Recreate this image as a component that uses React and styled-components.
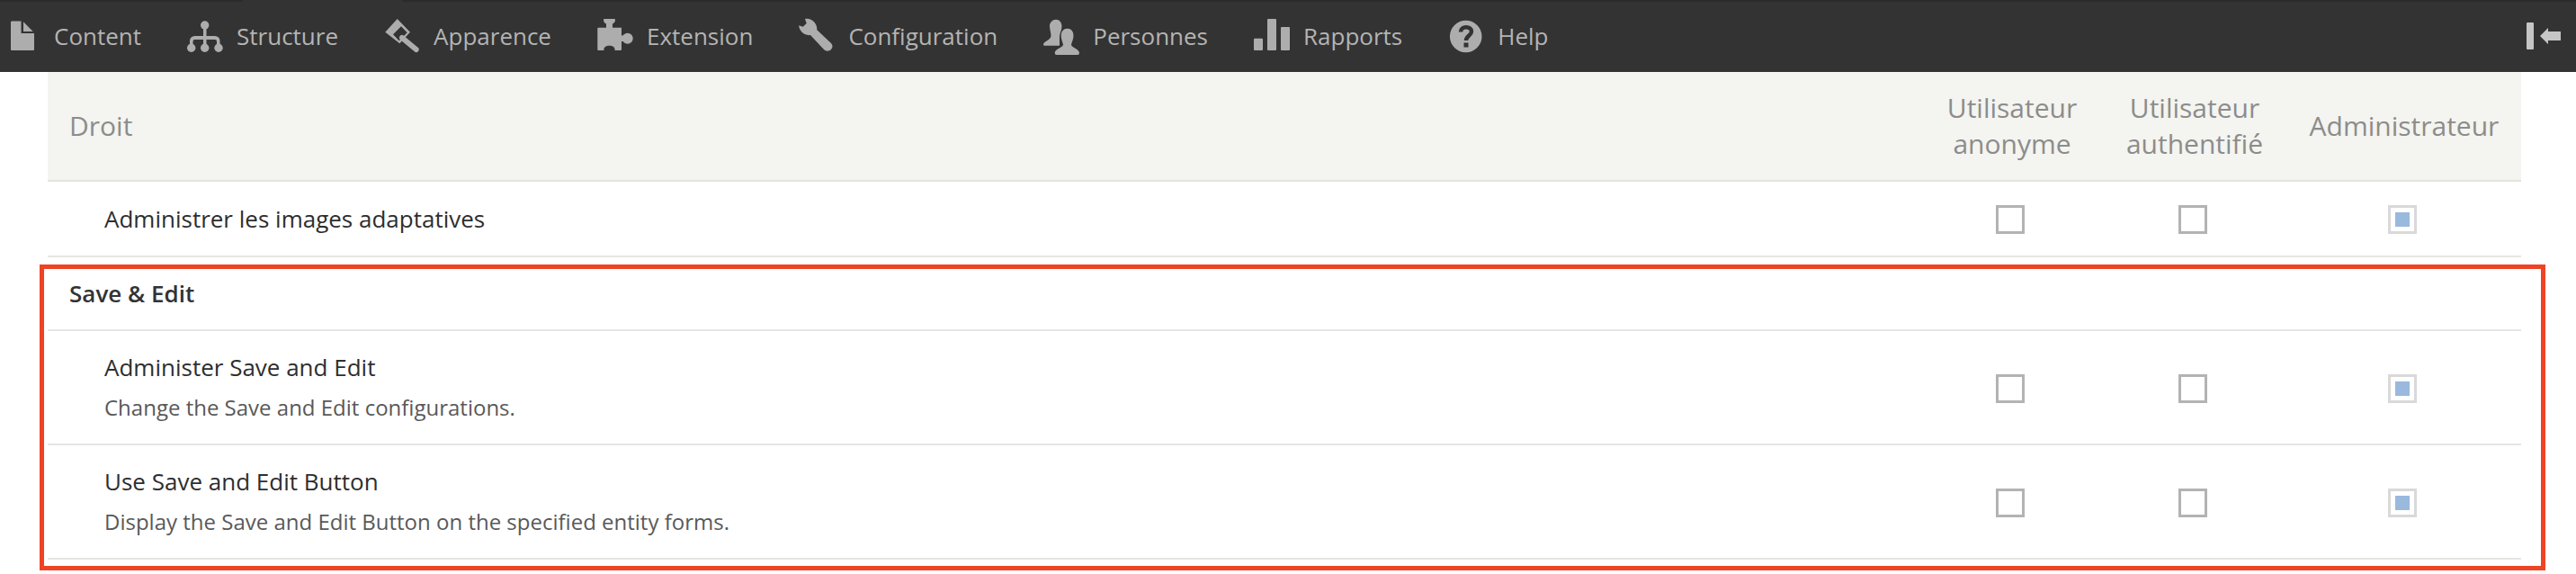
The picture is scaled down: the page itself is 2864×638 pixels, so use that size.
import React from "react";
import styled, { createGlobalStyle } from "styled-components";

const GlobalStyle = createGlobalStyle`
  html, body {
    margin: 0;
    padding: 0;
    background: #fff;
  }
  body {
    font-family: "Open Sans", "Liberation Sans", sans-serif;
  }
`;

const Page = styled.div`
  position: relative;
  width: 2864px;
  height: 638px;
  overflow: hidden;
  background: #fff;
`;

const Toolbar = styled.nav`
  display: flex;
  align-items: center;
  gap: 51px;
  height: 80px;
  padding: 0 17px 0 5px;
  box-sizing: border-box;
  background-color: #333;
  background-image: linear-gradient(
    to right,
    #2b2b2b 270px,
    #333 270px,
    #333 447px,
    #2b2b2b 447px
  );
  background-size: 100% 2px;
  background-repeat: no-repeat;
`;

const NavItem = styled.a`
  display: flex;
  align-items: center;
  gap: 15px;
  color: #b4b4b4;
  font-size: 26px;
  line-height: 40px;
  white-space: nowrap;
`;

const NavIcon = styled.svg`
  display: block;
  width: 40px;
  height: 40px;
  fill: #adadad;
  overflow: visible;
`;

const Collapse = styled.svg`
  display: block;
  width: 38px;
  height: 30px;
  margin-left: auto;
  fill: #c6c6c6;
`;

const Table = styled.div`
  margin: 0 61px 0 53px;
`;

const Row = styled.div`
  display: grid;
  grid-template-columns: 1fr 200px 206px 260px;
  align-items: center;
  border-bottom: 2px solid ${(p) => (p.$head ? "#e4e4de" : "#e5e5e2")};
  background: ${(p) => (p.$head ? "#f4f4f0" : "transparent")};
  min-height: ${(p) => p.$height}px;
`;

const HeadCell = styled.div`
  color: #8c8c8c;
  font-size: 30px;
  line-height: 40px;
  text-align: ${(p) => (p.$first ? "left" : "center")};
  padding-left: ${(p) => (p.$first ? "24px" : "0")};
`;

const GroupTitle = styled.div`
  grid-column: 1 / -1;
  padding-left: 24px;
  color: #333;
  font-size: 26px;
  font-weight: 600;
  line-height: 40px;
`;

const PermCell = styled.div`
  padding-left: 63px;
`;

const PermTitle = styled.div`
  color: #2e2e2e;
  font-size: 26px;
  line-height: 40px;
`;

const PermDesc = styled.div`
  margin-top: 5px;
  color: #595959;
  font-size: 24px;
  line-height: 40px;
`;

const BoxCell = styled.div`
  display: flex;
  justify-content: center;
  padding-right: 4px;
  padding-top: ${(p) => p.$nudge}px;
`;

const CheckBox = styled.span`
  display: flex;
  align-items: center;
  justify-content: center;
  width: 32px;
  height: 32px;
  box-sizing: border-box;
  border: 3px solid ${(p) => (p.$checked ? "#d9d9d9" : "#b3b3b3")};
  background: #fff;

  &::after {
    content: "";
    display: ${(p) => (p.$checked ? "block" : "none")};
    width: 16px;
    height: 16px;
    background: #99b9dd;
  }
`;

const Highlight = styled.div`
  position: absolute;
  top: 294px;
  left: 44px;
  width: 2786px;
  height: 340px;
  box-sizing: border-box;
  border: 5px solid #ee4325;
  pointer-events: none;
`;

const icons = {
  content: (
    <>
      <path d="M8 3.5H18.5V17H33V35a1 1 0 0 1-1 1H8a1 1 0 0 1-1-1V4.5a1 1 0 0 1 1-1z" />
      <path d="M21 4.3L31.7 15H21z" />
    </>
  ),
  structure: (
    <>
      <circle cx="19.7" cy="8" r="4.7" />
      <circle cx="4.7" cy="33.3" r="4.7" />
      <circle cx="19.7" cy="33.3" r="4.7" />
      <circle cx="35" cy="33.3" r="4.7" />
      <path d="M18 8h3.5v12H31a5.5 5.5 0 0 1 5.5 5.5V33H33v-7a2 2 0 0 0-2-2H21.5v9H18v-9H8.5a2 2 0 0 0-2 2v7H3v-7.5A5.5 5.5 0 0 1 8.500 20H18z" />
    </>
  ),
  appearance: (
    <>
      <path
        fillRule="evenodd"
        d="M14.700 1L1.300 15.700L17.300 28.300L29 15.700zM10 18.300L19 9.300L25.700 16.300L16.700 25.300z"
      />
      <path d="M20 22L35.700 35" stroke="#adadad" strokeWidth="6" strokeLinecap="round" />
    </>
  ),
  extension: (
    <>
      <path d="M1 10.700H10V6.500Q7 5 7 2Q7 1 8 1H19Q20 1 20 2Q20 5 17 6.500V10.700H27V19.500H30V26H27V35Q27 36 26 36H19.500C21 29 6 29 7.500 36H1.300Q.3 36 .3 35V11.700Q.3 10.700 1 10.700z" />
      <circle cx="33.700" cy="22.700" r="6" />
    </>
  ),
  configuration: (
    <path d="M7 1L8.700 6L4.700 9.700L.2 8.300C.5 15 7 20 13 19L28 35C30.500 37.500 34 37 36 35C38 33 38 30 36 28L20.300 13.300C21 6 14 -.5 7 1z" />
  ),
  people: (
    <>
      <path d="M14 1.700C18 1.700 20.500 5 20.500 9C20.500 14 18 18 18 22L18 30.700H1.500Q0 30.700 0 29.500C0 26 8 25 8.500 20C8.500 16 7 13 7 9C7 5 10 1.700 14 1.700z" />
      <path
        d="M26.700 11.700C31 11.700 33.500 15 33.500 19.500C33.500 24 31.500 27 31 29.500C31 33 40 34 40 39Q40 41 38 41H14.700Q12.700 41 12.700 39C12.700 34 22 33 22 29.500C21.500 27 19.700 24 19.700 19.500C19.700 15 22.500 11.700 26.700 11.700z"
        stroke="#333"
        strokeWidth="2.500"
        paintOrder="stroke"
      />
    </>
  ),
  reports: (
    <>
      <rect x="0" y="22.700" width="10" height="13.300" rx="1" />
      <rect x="15" y="1" width="10" height="35" rx="1" />
      <rect x="30" y="10" width="10" height="26" rx="1" />
    </>
  ),
  help: (
    <>
      <circle cx="19.700" cy="20.500" r="17.800" />
      <path
        d="M14 15.500C14 8.500 26 8.500 26 15C26 19.500 20 19.500 20 25"
        fill="none"
        stroke="#333"
        strokeWidth="4.500"
      />
      <rect x="17.500" y="27.500" width="5" height="5" fill="#333" />
    </>
  ),
};

const navItems = [
  { label: "Content", icon: "content" },
  { label: "Structure", icon: "structure" },
  { label: "Apparence", icon: "appearance" },
  { label: "Extension", icon: "extension" },
  { label: "Configuration", icon: "configuration" },
  { label: "Personnes", icon: "people" },
  { label: "Rapports", icon: "reports" },
  { label: "Help", icon: "help" },
];

function Boxes({ nudge }) {
  return (
    <>
      <BoxCell $nudge={nudge}>
        <CheckBox />
      </BoxCell>
      <BoxCell $nudge={nudge}>
        <CheckBox />
      </BoxCell>
      <BoxCell $nudge={nudge}>
        <CheckBox $checked />
      </BoxCell>
    </>
  );
}

function Permission({ title, desc }) {
  return (
    <Row $height={desc ? 125 : 82}>
      <PermCell>
        <PermTitle>{title}</PermTitle>
        {desc && <PermDesc>{desc}</PermDesc>}
      </PermCell>
      <Boxes nudge={desc ? 3 : 1} />
    </Row>
  );
}

export default function App() {
  return (
    <Page>
      <GlobalStyle />
      <Toolbar>
        {navItems.map((item) => (
          <NavItem key={item.label}>
            <NavIcon viewBox="0 0 40 40">{icons[item.icon]}</NavIcon>
            {item.label}
          </NavItem>
        ))}
        <Collapse viewBox="0 0 38 30">
          <rect x="0" y="0" width="8" height="30" rx="1" />
          <path d="M15 15L24 6V10H38V20H24V24z" />
        </Collapse>
      </Toolbar>
      <Table>
        <Row $head $height={120}>
          <HeadCell $first>Droit</HeadCell>
          <HeadCell>
            Utilisateur
            <br />
            anonyme
          </HeadCell>
          <HeadCell>
            Utilisateur
            <br />
            authentifié
          </HeadCell>
          <HeadCell>Administrateur</HeadCell>
        </Row>
        <Permission title="Administrer les images adaptatives" />
        <Row $height={80}>
          <GroupTitle>Save &amp; Edit</GroupTitle>
        </Row>
        <Permission
          title="Administer Save and Edit"
          desc="Change the Save and Edit configurations."
        />
        <Permission
          title="Use Save and Edit Button"
          desc="Display the Save and Edit Button on the specified entity forms."
        />
      </Table>
      <Highlight />
    </Page>
  );
}
